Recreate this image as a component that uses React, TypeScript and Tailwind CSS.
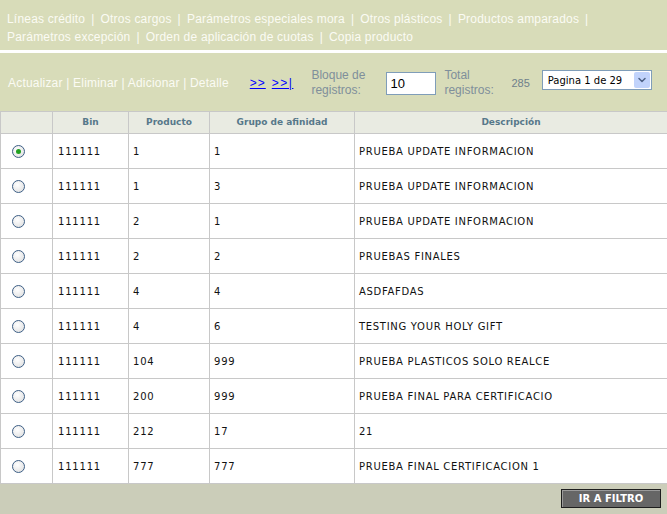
import { ChevronDown } from "lucide-react";

const topLinks1 = [
  "Líneas crédito",
  "Otros cargos",
  "Parámetros especiales mora",
  "Otros plásticos",
  "Productos amparados",
];
const topLinks2 = ["Parámetros excepción", "Orden de aplicación de cuotas", "Copia producto"];

const rows = [
  { bin: "111111", producto: "1", grupo: "1", desc: "PRUEBA UPDATE INFORMACION" },
  { bin: "111111", producto: "1", grupo: "3", desc: "PRUEBA UPDATE INFORMACION" },
  { bin: "111111", producto: "2", grupo: "1", desc: "PRUEBA UPDATE INFORMACION" },
  { bin: "111111", producto: "2", grupo: "2", desc: "PRUEBAS FINALES" },
  { bin: "111111", producto: "4", grupo: "4", desc: "ASDFAFDAS" },
  { bin: "111111", producto: "4", grupo: "6", desc: "TESTING YOUR HOLY GIFT" },
  { bin: "111111", producto: "104", grupo: "999", desc: "PRUEBA PLASTICOS SOLO REALCE" },
  { bin: "111111", producto: "200", grupo: "999", desc: "PRUEBA FINAL PARA CERTIFICACIO" },
  { bin: "111111", producto: "212", grupo: "17", desc: "21" },
  { bin: "111111", producto: "777", grupo: "777", desc: "PRUEBA FINAL CERTIFICACION 1" },
];

function Radio({ checked }: { checked?: boolean }) {
  return (
    <span className="flex h-[13px] w-[13px] items-center justify-center rounded-full border border-[#3d5f86] bg-[radial-gradient(circle_at_40%_35%,#ffffff_0%,#dcdcdc_100%)]">
      {checked && <span className="h-[5px] w-[5px] rounded-full bg-[#21a121]" />}
    </span>
  );
}

function Sep() {
  return <span className="mx-[6px]">|</span>;
}

export default function App() {
  return (
    <div className="flex h-[514px] w-[667px] flex-col bg-white font-['Liberation_Sans',sans-serif]">
      {/* Menu */}
      <div className="h-[50px] bg-[#d8dcb9] px-[7px] pt-[10px] text-[12px] leading-[18px] tracking-[0.2px] text-[#fbfbf4]">
        <div>
          {topLinks1.map((l, i) => (
            <span key={l}>
              {i > 0 && <Sep />}
              {l}
            </span>
          ))}
          <Sep />
        </div>
        <div>
          {topLinks2.map((l, i) => (
            <span key={l}>
              {i > 0 && <Sep />}
              {l}
            </span>
          ))}
        </div>
      </div>

      {/* Toolbar */}
      <div className="mt-[3px] flex h-[58px] items-center bg-[#d8dcb9] pl-[8px] pt-[2px] text-[12px]">
        <div className="tracking-[0.2px] text-[#fbfbf4]">
          Actualizar <span>|</span> Eliminar <span>|</span> Adicionar <span>|</span> Detalle
        </div>
        <a className="ml-[21px] tracking-[1px] text-[#0000ff] underline">&gt;&gt;</a>
        <a className="ml-[6px] tracking-[1.5px] text-[#0000ff] underline">&gt;&gt;|</a>
        <div className="ml-[18px] w-[60px] leading-[15px] text-[#7f8f9b]">
          Bloque de registros:
        </div>
        <input
          defaultValue="10"
          className="ml-[15px] h-[23px] w-[50px] border border-[#7f9db9] bg-white px-[3px] text-[13px] text-black outline-none"
        />
        <div className="ml-[8px] w-[60px] leading-[15px] text-[#7f8f9b]">Total registros:</div>
        <div className="ml-[7px] text-[11px] text-[#6f7f8b]">285</div>
        <div className="ml-[12px] -mt-[6px] flex h-[20px] w-[110px] items-center justify-between border border-[#7f9db9] bg-white pl-[5px] pr-[1px] font-['DejaVu_Sans',sans-serif] text-[10px] text-black">
          <span>Pagina 1 de 29</span>
          <span className="flex h-[16px] w-[16px] items-center justify-center rounded-[2px] bg-[#c1d3fb] text-[#4d6185]">
            <ChevronDown size={12} strokeWidth={3} />
          </span>
        </div>
      </div>

      {/* Grid */}
      <table className="w-[667px] table-fixed border-collapse font-['DejaVu_Sans',sans-serif] text-[10px]">
        <colgroup>
          <col className="w-[52px]" />
          <col className="w-[76px]" />
          <col className="w-[81px]" />
          <col className="w-[145px]" />
          <col className="w-[313px]" />
        </colgroup>
        <thead>
          <tr className="h-[22px] bg-[#e9ebe2] text-[9px] text-[#57788a]">
            <th className="border border-[#c8c8c8]" />
            <th className="border border-[#c8c8c8] font-bold">Bin</th>
            <th className="border border-[#c8c8c8] font-bold">Producto</th>
            <th className="border border-[#c8c8c8] font-bold">Grupo de afinidad</th>
            <th className="border border-[#c8c8c8] font-bold">Descripción</th>
          </tr>
        </thead>
        <tbody className="text-[#111]">
          {rows.map((r, i) => (
            <tr key={i} className="h-[35px]">
              <td className="border border-[#c8c8c8] pl-[11px]">
                <Radio checked={i === 0} />
              </td>
              <td className="border border-[#c8c8c8] pl-[5px] tracking-[0.8px]">{r.bin}</td>
              <td className="border border-[#c8c8c8] pl-[4px] tracking-[0.8px]">{r.producto}</td>
              <td className="border border-[#c8c8c8] pl-[4px] tracking-[0.8px]">{r.grupo}</td>
              <td className="border border-[#c8c8c8] pl-[4px] tracking-[0.7px]">{r.desc}</td>
            </tr>
          ))}
        </tbody>
      </table>

      {/* Footer */}
      <div className="flex flex-1 items-start justify-end bg-[#cbcdb9] pr-[6px] pt-[5px]">
        <button className="h-[19px] w-[100px] border border-[#1e1e1e] bg-[#666666] font-['DejaVu_Sans',sans-serif] text-[10px] font-bold text-white shadow-[inset_1px_1px_0_#9a9a9a]">
          IR A FILTRO
        </button>
      </div>
    </div>
  );
}
